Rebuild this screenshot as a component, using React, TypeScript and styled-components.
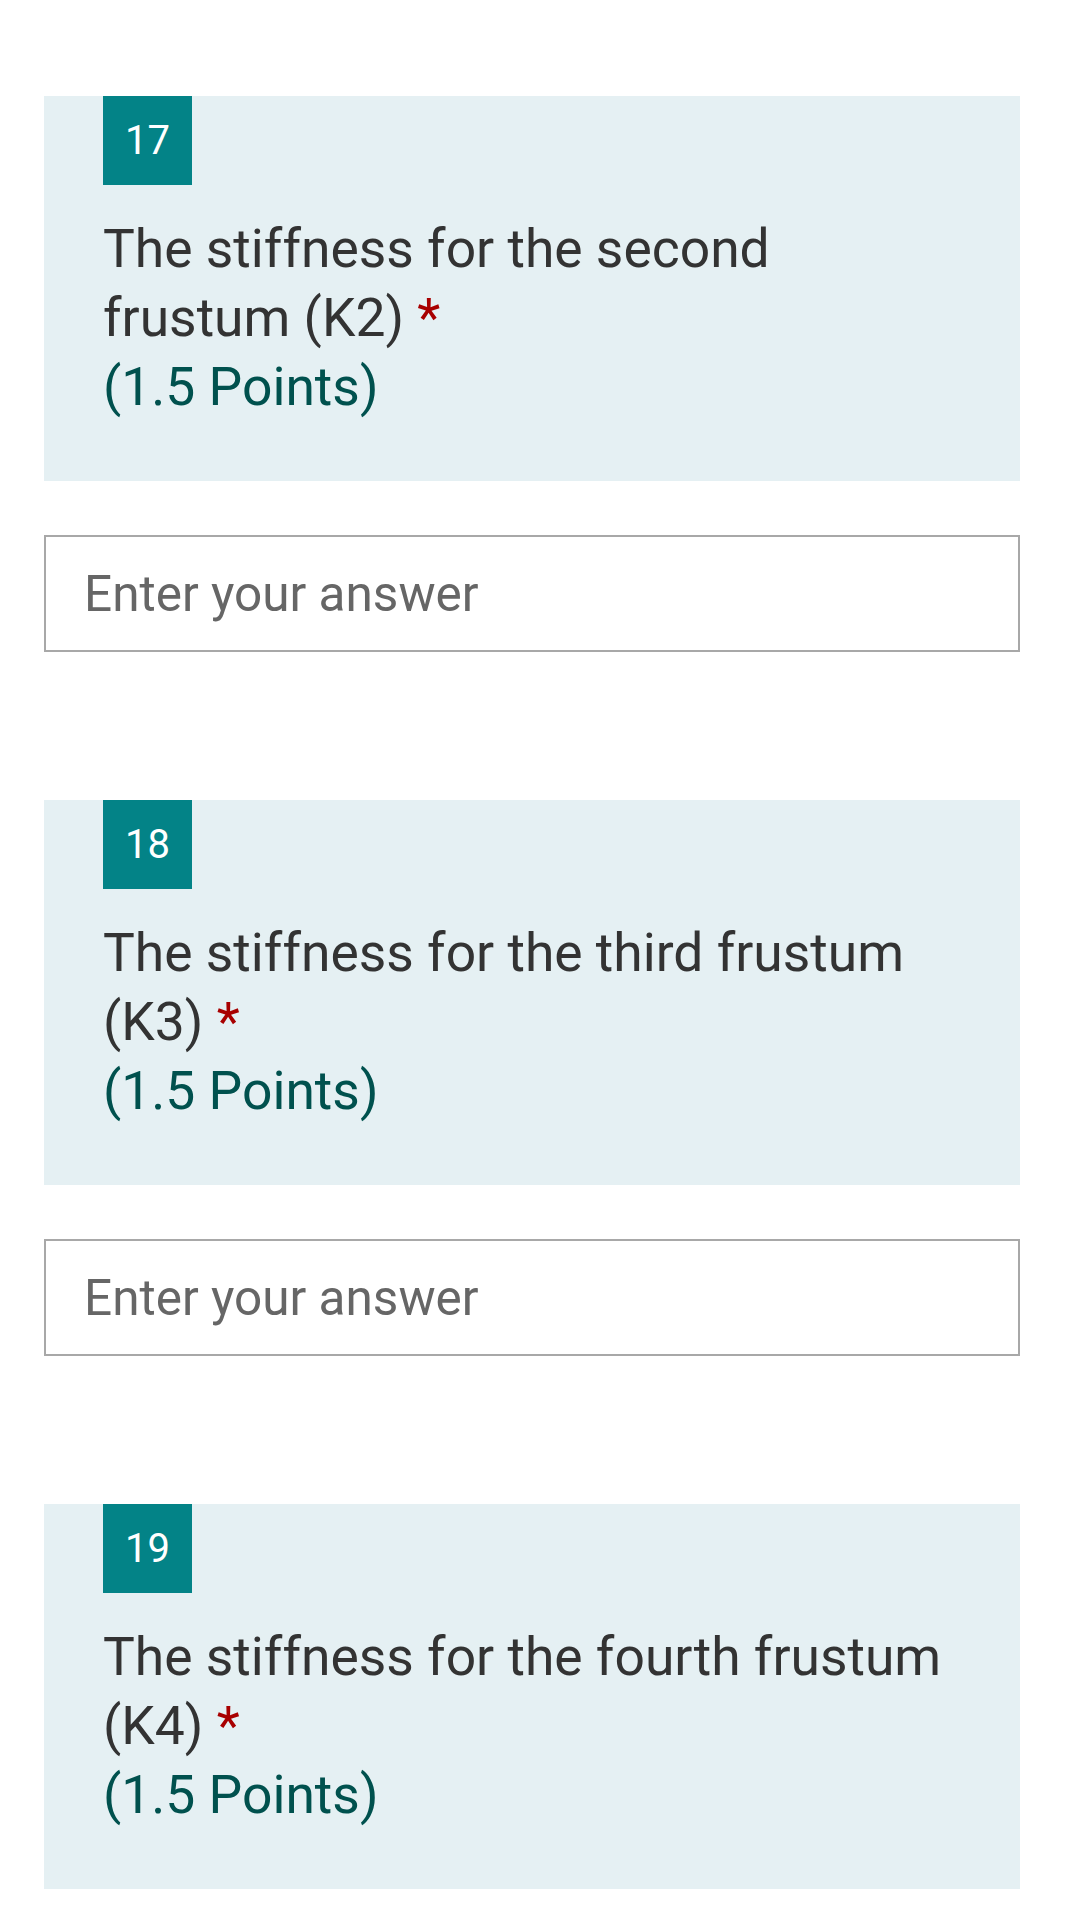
import React from 'react';
import styled, { createGlobalStyle } from 'styled-components';

type Question = {
  number: number;
  title: string;
  points: string;
};

const questions: Question[] = [
  { number: 17, title: 'The stiffness for the second frustum (K2)', points: '(1.5 Points)' },
  { number: 18, title: 'The stiffness for the third frustum (K3)', points: '(1.5 Points)' },
  { number: 19, title: 'The stiffness for the fourth frustum (K4)', points: '(1.5 Points)' },
];

const GlobalStyle = createGlobalStyle`
  html, body {
    margin: 0;
    padding: 0;
    background: #ffffff;
  }
  body {
    font-family: Roboto, "Noto Sans", "Liberation Sans", sans-serif;
  }
`;

const Page = styled.main`
  display: flex;
  flex-direction: column;
  padding: 96px 45px 0 44px;
`;

const QuestionBlock = styled.section`
  display: flex;
  flex-direction: column;
  margin-bottom: 148px;
`;

const Card = styled.div`
  display: flex;
  flex-direction: column;
  align-items: flex-start;
  background: #e5f0f3;
  padding: 0 70px 60px 59px;
`;

const NumberBadge = styled.div`
  display: flex;
  align-items: center;
  justify-content: center;
  width: 89px;
  height: 89px;
  background: #038387;
  color: #ffffff;
  font-size: 40px;
  line-height: 1;
`;

const Title = styled.div`
  margin-top: 29px;
  font-size: 53.4px;
  line-height: 69px;
  color: #333333;
`;

const Required = styled.span`
  color: #a80000;
`;

const Points = styled.span`
  display: block;
  color: #00514e;
`;

const AnswerInput = styled.input`
  box-sizing: border-box;
  margin-top: 54px;
  width: 100%;
  height: 117px;
  padding: 0 38px;
  border: 2px solid #a8a8a8;
  border-radius: 0;
  background: #ffffff;
  font-family: Roboto, "Noto Sans", "Liberation Sans", sans-serif;
  font-size: 49.5px;
  color: #333333;
  outline: none;

  &::placeholder {
    color: #666666;
  }
`;

const App = () => {
  return (
    <>
      <GlobalStyle />
      <Page>
        {questions.map((q) => (
          <QuestionBlock key={q.number}>
            <Card>
              <NumberBadge>{q.number}</NumberBadge>
              <Title>
                {q.title} <Required>*</Required>
                <Points>{q.points}</Points>
              </Title>
            </Card>
            <AnswerInput placeholder='Enter your answer' />
          </QuestionBlock>
        ))}
      </Page>
    </>
  );
};

export default App;
